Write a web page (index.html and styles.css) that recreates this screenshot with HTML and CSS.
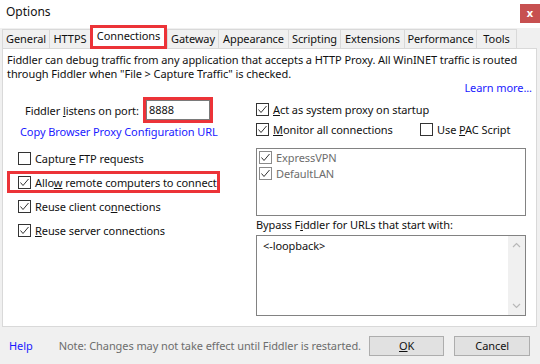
FILE: index.html
```html
<!DOCTYPE html>
<html lang="en">
<head>
  <meta charset="UTF-8">
  <title>Options</title>
  <link rel="stylesheet" href="styles.css">
</head>
<body>
  <div class="window">
    <div class="titlebar">
      <span class="title">Options</span>
      <span class="close">x</span>
    </div>

    <div class="tabs">
      <div class="tab t-general">General</div>
      <div class="tab t-https">HTTPS</div>
      <div class="tab active">Connections</div>
      <div class="tab t-gateway">Gateway</div>
      <div class="tab t-appearance">Appearance</div>
      <div class="tab t-scripting">Scripting</div>
      <div class="tab t-extensions">Extensions</div>
      <div class="tab t-performance">Performance</div>
      <div class="tab t-tools">Tools</div>
    </div>

    <div class="panel">
      <p class="intro">Fiddler can debug traffic from any application that accepts a HTTP Proxy. All WinINET traffic is routed<br>through Fiddler when "File &gt; Capture Traffic" is checked.</p>
      <div class="learn"><a href="#">Learn more...</a></div>

      <div class="columns">
        <div class="col-left">
          <div class="port-row">
            <span class="port-label">Fiddler <u>l</u>istens on port:</span>
            <span class="mark port-mark"><span class="port-input">8888</span></span>
          </div>
          <div class="copy-link"><a href="#">Copy Browser Proxy Configuration URL</a></div>

          <div class="check-row"><span class="box"></span><span>Captur<u>e</u> FTP requests</span></div>
          <div class="check-row mark"><span class="box on"></span><span>Allo<u>w</u> remote computers to connect</span></div>
          <div class="check-row"><span class="box on"></span><span>Reuse client co<u>n</u>nections</span></div>
          <div class="check-row"><span class="box on"></span><span><u>R</u>euse server connections</span></div>
        </div>

        <div class="col-right">
          <div class="check-row first"><span class="box on"></span><span><u>A</u>ct as system proxy on startup</span></div>
          <div class="check-row pair">
            <span class="pair-item wide"><span class="box on"></span><span><u>M</u>onitor all connections</span></span>
            <span class="pair-item"><span class="box"></span><span>Use <u>P</u>AC Script</span></span>
          </div>

          <div class="listbox">
            <div class="list-item"><span class="box on dim"></span><span>ExpressVPN</span></div>
            <div class="list-item"><span class="box on dim"></span><span>DefaultLAN</span></div>
          </div>

          <div class="bypass-label">Bypass F<u>i</u>ddler for URLs that start with:</div>
          <div class="textarea">
            <div class="text">&lt;-loopback&gt;</div>
            <div class="scrollbar">
              <svg width="17" height="79" viewBox="0 0 17 79">
                <polyline points="5,11 8.5,7.5 12,11" fill="none" stroke="#b8b8b8" stroke-width="1.2"/>
                <polyline points="5,68 8.5,71.5 12,68" fill="none" stroke="#b8b8b8" stroke-width="1.2"/>
              </svg>
            </div>
          </div>
        </div>
      </div>
    </div>

    <div class="footer">
      <a class="help" href="#">Help</a>
      <span class="note">Note: Changes may not take effect until Fiddler is restarted.</span>
      <span class="button ok"><u>O</u>K</span>
      <span class="button">Cancel</span>
    </div>
  </div>
</body>
</html>
```

FILE: styles.css
```css
body { margin: 0; padding: 0; font-family: "Noto Sans", "Open Sans", sans-serif; font-size: 11px; letter-spacing: -0.08px; color: #111; }
a { color: #1a1aff; text-decoration: none; }
u { text-underline-offset: 1px; }
.window { width: 540px; height: 364px; overflow: hidden; background: #f0f0f0; }

.titlebar { height: 28px; background: #fff; display: flex; align-items: flex-start; justify-content: space-between; }
.title { padding: 4px 0 0 6px; font-size: 12px; line-height: 16px; letter-spacing: 0; }
.close { width: 20px; height: 19px; margin-top: 4px; background: #c75050; color: #fff; font-size: 11px; font-weight: bold; line-height: 17px; text-align: center; }

.tabs { height: 20px; display: flex; align-items: flex-end; padding-left: 2px; position: relative; z-index: 1; }
.tab { height: 19px; box-sizing: border-box; border: 1px solid #d9d9d9; border-bottom: none; margin-right: -1px; background: #f0f0f0; line-height: 17px; text-align: center; white-space: nowrap; }
.t-general { width: 48px; }
.t-https { width: 42px; }
.t-gateway { width: 52px; }
.t-appearance { width: 71px; }
.t-scripting { width: 53px; }
.t-extensions { width: 65px; }
.t-performance { width: 73px; }
.t-tools { width: 41px; }
.tab.active { width: 77px; height: 24px; margin: 0 0 -1px 0; background: #fff; border: 3px solid #ec3338; line-height: 15px; padding-bottom: 4px; }

.panel { margin-left: 2px; width: 535px; height: 279px; box-sizing: border-box; background: #fff; border: 1px solid #d9d9d9; }
.intro { margin: 0; padding: 4px 0 0 4px; line-height: 14px; white-space: nowrap; }
.learn { text-align: right; padding-right: 4px; line-height: 14px; }

.columns { display: flex; }
.col-left { width: 250px; }
.col-right { width: 270px; }

.port-row { display: flex; align-items: center; margin-top: 2px; height: 26px; padding-left: 22px; white-space: nowrap; }
.port-label { width: 118px; }
.mark { border: 3px solid #ec3338; box-sizing: border-box; }
.port-mark { display: block; width: 70px; height: 26px; }
.port-input { display: block; height: 20px; box-sizing: border-box; border: 1px solid #7a7a7a; padding-left: 2px; line-height: 18px; }
.copy-link { margin-top: 2px; padding-left: 17px; line-height: 14px; margin-bottom: 8px; white-space: nowrap; }

.check-row { display: flex; align-items: center; height: 22px; margin-bottom: 2px; padding-left: 15px; white-space: nowrap; }
.check-row.mark { margin-left: 4px; width: 213px; padding-left: 8px; }
.box { display: inline-block; width: 13px; height: 13px; box-sizing: border-box; border: 1px solid #333; background: #fff; margin-right: 4px; flex: none; }
.box.on { background: #fff url("data:image/svg+xml,%3Csvg xmlns='http://www.w3.org/2000/svg' width='11' height='11'%3E%3Cpolyline points='1.5,5.5 4,8.5 9.5,2' fill='none' stroke='%23333' stroke-width='1'/%3E%3C/svg%3E") no-repeat center; }
.box.dim { border-color: #8a8a8a; }

.col-right .check-row { padding-left: 3px; height: 20px; margin-bottom: 0; }
.col-right .check-row.first { margin-top: 4px; }
.pair-item { display: flex; align-items: center; }
.pair-item.wide { width: 164px; flex: none; }

.listbox { margin: 9px 0 0 3px; width: 270px; height: 68px; box-sizing: border-box; border: 1px solid #828282; padding-top: 0; color: #6d6d6d; }
.list-item { display: flex; align-items: center; height: 16px; padding-left: 2px; }

.bypass-label { margin: 2px 0 0 3px; line-height: 14px; }
.textarea { margin: 3px 0 0 3px; width: 270px; height: 81px; box-sizing: border-box; border: 1px solid #828282; display: flex; justify-content: space-between; }
.text { padding: 3px 0 0 6px; line-height: 14px; }
.scrollbar { width: 17px; background: #f0f0f0; }
.scrollbar svg { display: block; }

.footer { display: flex; align-items: center; height: 37px; padding: 0 0 0 9px; }
.help { width: 50px; }
.note { color: #6d6d6d; width: 312px; white-space: nowrap; }
.button { width: 76px; height: 20px; box-sizing: border-box; border: 1px solid #adadad; background: #e1e1e1; text-align: center; line-height: 18px; margin-right: 10px; }
```
